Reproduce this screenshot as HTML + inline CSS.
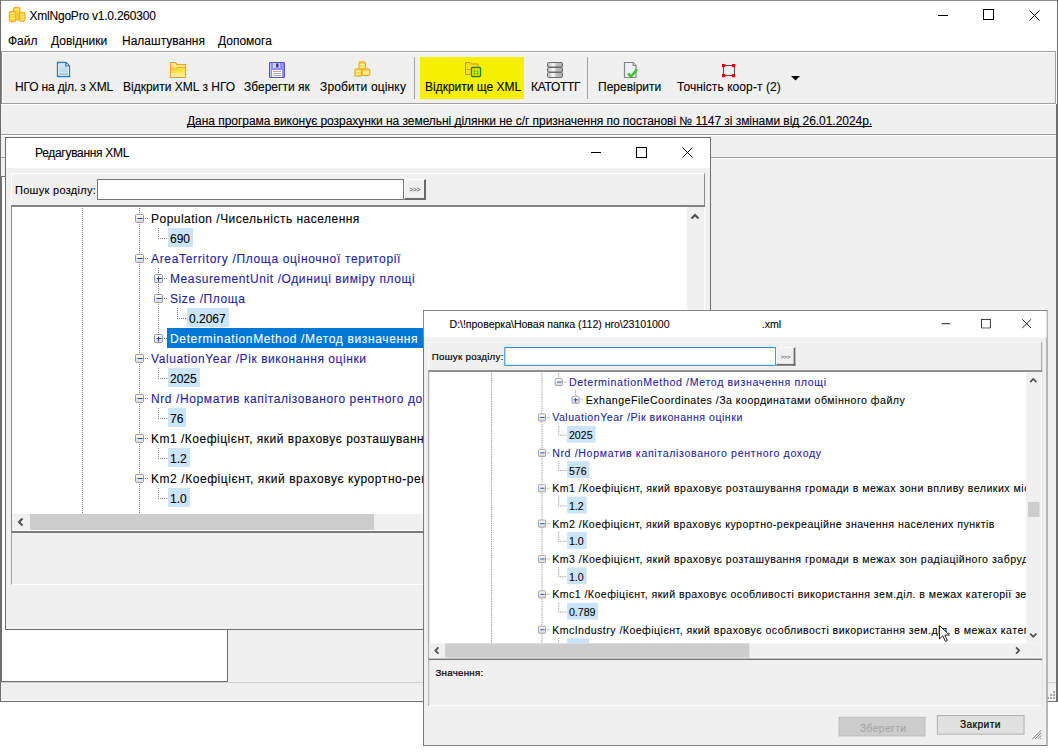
<!DOCTYPE html>
<html><head><meta charset="utf-8"><style>
html,body{margin:0;padding:0;background:#fff;width:1058px;height:753px;overflow:hidden;position:relative;font-family:"Liberation Sans", sans-serif}
.t{position:absolute;white-space:pre;font-family:"Liberation Sans", sans-serif;-webkit-text-stroke:0.1px currentColor}
</style></head><body>
<div style="position:absolute;left:0px;top:0px;width:1058px;height:702px;background:#fff;"></div><div style="position:absolute;left:0px;top:0px;width:1058px;height:1px;background:#8a8a8a"></div><div style="position:absolute;left:0px;top:0px;width:1px;height:702px;background:#6e6e6e"></div><div style="position:absolute;left:1057px;top:0px;width:1px;height:702px;background:#6e6e6e"></div><div style="position:absolute;left:1056px;top:104px;width:1px;height:598px;background:#6e6e6e"></div><div style="position:absolute;left:0px;top:701px;width:1058px;height:1px;background:#6e6e6e"></div><svg style="position:absolute;left:8px;top:6px" width="18" height="17" viewBox="0 0 18 17">
<g fill="#ffd535" stroke="#f29a18" stroke-width="0.9">
<rect x="5.5" y="1.3" width="6.5" height="12.5" rx="1.5"/>
<rect x="1.3" y="5.3" width="6.5" height="10.5" rx="1.5"/>
<rect x="11.3" y="6.3" width="5.8" height="9" rx="1.5"/>
</g>
<g stroke="#fff6b0" stroke-width="0.9">
<path d="M2.5 7.5h4M2.5 10h4M2.5 12.5h4M12.5 8.5h3.5M12.5 11h3.5M12.5 13.5h3.5M6.5 3.5h4.5"/>
</g></svg><div class="t" style="left:29.5px;top:9.84px;font-size:12px;line-height:12px;color:#000;letter-spacing:-0.22px;">XmlNgoPro v1.0.260300</div><svg style="position:absolute;left:938px;top:9px" width="10" height="12" viewBox="0 0 10 12"><path d="M0 6.5h10" stroke="#000" stroke-width="1"/></svg><svg style="position:absolute;left:983px;top:9px" width="11" height="11" viewBox="0 0 11 11"><rect x="0.5" y="0.5" width="10" height="10" fill="none" stroke="#000" stroke-width="1"/></svg><svg style="position:absolute;left:1029px;top:10px" width="11" height="11" viewBox="0 0 11 11"><path d="M0.5 0.5L10.5 10.5M10.5 0.5L0.5 10.5" stroke="#000" stroke-width="1"/></svg><div class="t" style="left:8px;top:34.84px;font-size:12px;line-height:12px;color:#000;">Файл</div><div class="t" style="left:51px;top:34.84px;font-size:12px;line-height:12px;color:#000;">Довідники</div><div class="t" style="left:122px;top:34.84px;font-size:12px;line-height:12px;color:#000;">Налаштування</div><div class="t" style="left:218px;top:34.84px;font-size:12px;line-height:12px;color:#000;">Допомога</div><div style="position:absolute;left:1px;top:51px;width:1055px;height:53px;background:#f0f0f0;border-top:1px solid #a0a0a0;border-bottom:1px solid #a0a0a0;border-right:1px solid #a0a0a0;border-left:1px solid #8a8a8a;box-shadow:inset 1px 1px #fff;box-sizing:border-box"></div><div style="position:absolute;left:420px;top:57px;width:104px;height:42px;background:#f5ef00"></div><div style="position:absolute;left:414px;top:57px;width:1px;height:42px;background:#a0a0a0"></div><div style="position:absolute;left:587px;top:57px;width:1px;height:42px;background:#a0a0a0"></div><div class="t" style="left:15px;top:80.84px;font-size:12px;line-height:12px;color:#000;letter-spacing:-0.15px;">НГО на діл. з XML</div><div class="t" style="left:123px;top:80.84px;font-size:12px;line-height:12px;color:#000;">Відкрити XML з НГО</div><div class="t" style="left:244px;top:80.84px;font-size:12px;line-height:12px;color:#000;">Зберегти як</div><div class="t" style="left:320px;top:80.84px;font-size:12px;line-height:12px;color:#000;letter-spacing:0.15px;">Зробити оцінку</div><div class="t" style="left:425px;top:80.84px;font-size:12px;line-height:12px;color:#000;">Відкрити ще XML</div><div class="t" style="left:531px;top:80.84px;font-size:12px;line-height:12px;color:#000;letter-spacing:-0.3px;">КАТОТТГ</div><div class="t" style="left:598px;top:80.84px;font-size:12px;line-height:12px;color:#000;">Перевірити</div><div class="t" style="left:677px;top:80.84px;font-size:12px;line-height:12px;color:#000;letter-spacing:0.08px;">Точність коор-т (2)</div><svg style="position:absolute;left:56px;top:61px" width="15" height="17" viewBox="0 0 15 17"><defs><linearGradient id="dg" x1="0" y1="0" x2="0" y2="1"><stop offset="0" stop-color="#c8e0f2"/><stop offset="1" stop-color="#a8d0ee"/></linearGradient></defs>
<path d="M1.5 1.5h8.5l3.5 3.5v10.5h-12z" fill="#fff" stroke="#1f7bc3" stroke-width="1.3"/>
<rect x="3" y="3" width="9" height="8" fill="url(#dg)" opacity="0.8"/><rect x="3" y="11.5" width="9" height="2.5" fill="#9fd0ee"/>
<path d="M9.8 2.2v2.8h2.8" fill="none" stroke="#1f7bc3" stroke-width="1.2"/></svg><svg style="position:absolute;left:169px;top:61px" width="18" height="18" viewBox="0 0 18 18"><defs><linearGradient id="fg" x1="0" y1="0" x2="0" y2="1"><stop offset="0" stop-color="#fff0b0"/><stop offset="0.5" stop-color="#ffe030"/><stop offset="1" stop-color="#fff5c0"/></linearGradient></defs>
<path d="M1.5 1.5h5l1.5 2h8.5v13h-15z" fill="url(#fg)" stroke="#f0a030" stroke-width="1.2"/>
<path d="M1.5 8h6l1-1.5h8" fill="none" stroke="#e8b040" stroke-width="1"/></svg><svg style="position:absolute;left:268px;top:61px" width="18" height="18" viewBox="0 0 18 18"><rect x="1.5" y="1.5" width="15" height="15" rx="0.5" fill="#9090f2" stroke="#5050c8" stroke-width="1"/>
<path d="M2.5 2.5v13" stroke="#c0c0ff" stroke-width="1"/>
<rect x="5" y="2" width="7" height="5" fill="#d0d0ff"/><rect x="8" y="2.5" width="2.5" height="4" fill="#3838a0"/>
<rect x="4" y="9" width="10" height="7" fill="#fff"/><path d="M5 10.5h8M5 12.5h8M5 14.5h8" stroke="#a8a8a8" stroke-width="1"/></svg><svg style="position:absolute;left:354px;top:61px" width="17" height="17" viewBox="0 0 17 17"><g fill="#ffd84a" stroke="#f0a020" stroke-width="0.9">
<rect x="5" y="0.8" width="6.5" height="7.5" rx="1"/>
<rect x="0.8" y="7.8" width="6.8" height="7.5" rx="1"/>
<rect x="8" y="8" width="7.8" height="6.5" rx="1"/></g>
<path d="M6 3.5h4.5M6 6h4.5M2 10.5h4.5M2 13h4.5M9 11h6M9 13h6" stroke="#fff8d0" stroke-width="0.9"/></svg><svg style="position:absolute;left:464px;top:61px" width="18" height="17" viewBox="0 0 18 17"><path d="M1.5 1.5h4.5l1.5 1.5h6.5v5h-6v5.5h-6.5z" fill="#ffe020" stroke="#d49010" stroke-width="1"/>
<path d="M2.5 8.5h5" stroke="#d49010" stroke-width="0.8"/>
<rect x="7.5" y="6.5" width="9" height="9" rx="1" fill="#f0f000" stroke="#108010" stroke-width="1.3"/>
<path d="M10.3 8.5v5.5M13.7 8.5v5.5M9 10h6M9 12.5h6" stroke="#60b040" stroke-width="0.8"/></svg><svg style="position:absolute;left:546px;top:61px" width="18" height="18" viewBox="0 0 18 18"><defs><linearGradient id="cg" x1="0" y1="0" x2="1" y2="0"><stop offset="0" stop-color="#b8b8b8"/><stop offset="0.4" stop-color="#f8f8f8"/><stop offset="0.6" stop-color="#c0c0c0"/><stop offset="1" stop-color="#a8a8a8"/></linearGradient></defs>
<g fill="url(#cg)" stroke="#6a6a6a" stroke-width="1"><rect x="1.5" y="1.5" width="15" height="4.5" rx="1"/><rect x="1.5" y="6.5" width="15" height="4.5" rx="1"/><rect x="1.5" y="11.5" width="15" height="5" rx="1"/></g></svg><svg style="position:absolute;left:623px;top:61px" width="16" height="18" viewBox="0 0 16 18"><path d="M1.5 1.5h8.5l3 3v12h-11.5z" fill="#eef0fa" stroke="#858585" stroke-width="1.2"/>
<path d="M10 1.5v3h3" fill="#ccc" stroke="#858585" stroke-width="1"/>
<path d="M5 12.5l3 3.2l6-7.5" fill="none" stroke="#40c030" stroke-width="2.6" stroke-linejoin="round"/></svg><svg style="position:absolute;left:721px;top:63px" width="16" height="16" viewBox="0 0 16 16"><rect x="2.5" y="2.5" width="11" height="10" fill="none" stroke="#555" stroke-width="1.1"/>
<g fill="#e00000"><rect x="1" y="1" width="3.2" height="3.2"/><rect x="11" y="1" width="3.2" height="3.2"/><rect x="1" y="11" width="3.2" height="3.2"/><rect x="11" y="11" width="3.2" height="3.2"/></g></svg><svg style="position:absolute;left:791px;top:76px" width="9" height="5" viewBox="0 0 9 5"><path d="M0 0h9L4.5 4.5z" fill="#000"/></svg><div style="position:absolute;left:1px;top:104px;width:1055px;height:31px;background:#f0f0f0;border-top:1px solid #fff;border-bottom:1px solid #a0a0a0;box-sizing:border-box"></div><div class="t" style="left:187px;top:114.84px;font-size:12px;line-height:12px;color:#000;letter-spacing:-0.045px;"><u style="text-decoration-skip-ink:none">Дана програма виконує розрахунки на земельні ділянки не с/г призначення по постанові № 1147 зі змінами від 26.01.2024р.</u></div><div style="position:absolute;left:1px;top:135px;width:1055px;height:23px;background:#f0f0f0;border-top:1px solid #fff;border-bottom:1px solid #a0a0a0;box-sizing:border-box"></div><div style="position:absolute;left:1px;top:158px;width:1055px;height:524px;background:#f0f0f0;border-top:1px solid #fff;box-sizing:border-box"></div><div style="position:absolute;left:1px;top:158px;width:227px;height:19px;background:#f0f0f0;border-bottom:1px solid #707070;box-sizing:border-box"></div><div style="position:absolute;left:1px;top:177px;width:227px;height:505px;background:#fff;border-left:1px solid #6c6f76;border-right:1px solid #707070;border-bottom:1px solid #707070;box-sizing:border-box"></div><div style="position:absolute;left:1px;top:682px;width:1055px;height:19px;background:#f0f0f0;border-top:1px solid #d0d0d0;border-bottom:1px solid #fff;box-sizing:border-box"></div><div style="position:absolute;left:5px;top:137px;width:706px;height:493px;transform-origin:0 0;transform:scale(1)"><div style="position:absolute;left:0px;top:0px;width:706px;height:493px;background:#f0f0f0;border:1px solid #6c6c6c;box-sizing:border-box"></div><div style="position:absolute;left:1px;top:1px;width:704px;height:30px;background:#fff"></div><div class="t" style="left:30px;top:9.84px;font-size:12px;line-height:12px;color:#000;letter-spacing:-0.3px;">Редагування XML</div><svg style="position:absolute;left:586px;top:9px" width="11" height="12" viewBox="0 0 11 12"><path d="M0 6.5h10" stroke="#000" stroke-width="1"/></svg><svg style="position:absolute;left:631px;top:10px" width="11" height="11" viewBox="0 0 11 11"><rect x="0.5" y="0.5" width="10" height="10" fill="none" stroke="#000" stroke-width="1"/></svg><svg style="position:absolute;left:677px;top:10px" width="11" height="11" viewBox="0 0 11 11"><path d="M0.5 0.5L10.5 10.5M10.5 0.5L0.5 10.5" stroke="#000" stroke-width="1"/></svg><div style="position:absolute;left:6px;top:36px;width:694px;height:412px;border-top:1px solid #fff;border-left:1px solid #fff;border-right:1px solid #8c8c8c;box-sizing:border-box"></div><div class="t" style="left:10px;top:47.69px;font-size:11px;line-height:11px;color:#000;letter-spacing:0.3px;">Пошук розділу:</div><div style="position:absolute;left:92px;top:42px;width:307px;height:21px;background:#fff;border:1px solid #767676;box-sizing:border-box"></div><div style="position:absolute;left:399px;top:42px;width:22px;height:21px;background:#f0f0f0;border-top:1px solid #fff;border-left:1px solid #fff;border-right:2px solid #6a6a6a;border-bottom:2px solid #6a6a6a;box-sizing:border-box"></div><div class="t" style="left:404.5px;top:49.50px;font-size:6.5px;line-height:6.5px;color:#555;letter-spacing:-0.3px;">&gt;&gt;&gt;</div><div style="position:absolute;left:6px;top:68px;width:694px;height:328px;background:#fff;border-top:2px solid #828282;border-left:1px solid #8a8b90;border-bottom:2px solid #7a7a7a;box-sizing:border-box"></div><div style="position:absolute;left:7px;top:70px;width:675px;height:307px;overflow:hidden"><div style="position:absolute;left:-7px;top:-70px;width:706px;height:493px"><svg style="position:absolute;left:0;top:0" width="706" height="493"><defs><linearGradient id="expg" x1="0" y1="0" x2="0" y2="1"><stop offset="0" stop-color="#fff"/><stop offset="1" stop-color="#d8d8d8"/></linearGradient></defs><line x1="77.5" y1="71" x2="77.5" y2="378" stroke="#808080" stroke-width="1" stroke-dasharray="1 1"/><line x1="134.5" y1="71" x2="134.5" y2="378" stroke="#808080" stroke-width="1" stroke-dasharray="1 1"/><line x1="153.5" y1="131" x2="153.5" y2="201" stroke="#808080" stroke-width="1" stroke-dasharray="1 1"/><line x1="172.5" y1="171" x2="172.5" y2="181" stroke="#808080" stroke-width="1" stroke-dasharray="1 1"/><rect x="130.5" y="77.5" width="8" height="8" rx="1" fill="url(#expg)" stroke="#9a9a9a" stroke-width="1"/><line x1="132.5" y1="81.5" x2="137.5" y2="81.5" stroke="#2040b0" stroke-width="1"/><line x1="140" y1="81.5" x2="144" y2="81.5" stroke="#808080" stroke-width="1" stroke-dasharray="1 1"/><line x1="153.5" y1="91" x2="153.5" y2="101" stroke="#808080" stroke-width="1" stroke-dasharray="1 1"/><line x1="153" y1="101.5" x2="162" y2="101.5" stroke="#808080" stroke-width="1" stroke-dasharray="1 1"/><rect x="130.5" y="117.5" width="8" height="8" rx="1" fill="url(#expg)" stroke="#9a9a9a" stroke-width="1"/><line x1="132.5" y1="121.5" x2="137.5" y2="121.5" stroke="#2040b0" stroke-width="1"/><line x1="140" y1="121.5" x2="144" y2="121.5" stroke="#808080" stroke-width="1" stroke-dasharray="1 1"/><rect x="149.5" y="137.5" width="8" height="8" rx="1" fill="url(#expg)" stroke="#9a9a9a" stroke-width="1"/><line x1="151.5" y1="141.5" x2="156.5" y2="141.5" stroke="#2040b0" stroke-width="1"/><line x1="153.5" y1="139.5" x2="153.5" y2="144.5" stroke="#2040b0" stroke-width="1"/><line x1="159" y1="141.5" x2="163" y2="141.5" stroke="#808080" stroke-width="1" stroke-dasharray="1 1"/><rect x="149.5" y="157.5" width="8" height="8" rx="1" fill="url(#expg)" stroke="#9a9a9a" stroke-width="1"/><line x1="151.5" y1="161.5" x2="156.5" y2="161.5" stroke="#2040b0" stroke-width="1"/><line x1="159" y1="161.5" x2="163" y2="161.5" stroke="#808080" stroke-width="1" stroke-dasharray="1 1"/><line x1="172.5" y1="171" x2="172.5" y2="181" stroke="#808080" stroke-width="1" stroke-dasharray="1 1"/><line x1="172" y1="181.5" x2="181" y2="181.5" stroke="#808080" stroke-width="1" stroke-dasharray="1 1"/><rect x="149.5" y="197.5" width="8" height="8" rx="1" fill="url(#expg)" stroke="#9a9a9a" stroke-width="1"/><line x1="151.5" y1="201.5" x2="156.5" y2="201.5" stroke="#2040b0" stroke-width="1"/><line x1="153.5" y1="199.5" x2="153.5" y2="204.5" stroke="#2040b0" stroke-width="1"/><line x1="159" y1="201.5" x2="163" y2="201.5" stroke="#808080" stroke-width="1" stroke-dasharray="1 1"/><rect x="130.5" y="217.5" width="8" height="8" rx="1" fill="url(#expg)" stroke="#9a9a9a" stroke-width="1"/><line x1="132.5" y1="221.5" x2="137.5" y2="221.5" stroke="#2040b0" stroke-width="1"/><line x1="140" y1="221.5" x2="144" y2="221.5" stroke="#808080" stroke-width="1" stroke-dasharray="1 1"/><line x1="153.5" y1="231" x2="153.5" y2="241" stroke="#808080" stroke-width="1" stroke-dasharray="1 1"/><line x1="153" y1="241.5" x2="162" y2="241.5" stroke="#808080" stroke-width="1" stroke-dasharray="1 1"/><rect x="130.5" y="257.5" width="8" height="8" rx="1" fill="url(#expg)" stroke="#9a9a9a" stroke-width="1"/><line x1="132.5" y1="261.5" x2="137.5" y2="261.5" stroke="#2040b0" stroke-width="1"/><line x1="140" y1="261.5" x2="144" y2="261.5" stroke="#808080" stroke-width="1" stroke-dasharray="1 1"/><line x1="153.5" y1="271" x2="153.5" y2="281" stroke="#808080" stroke-width="1" stroke-dasharray="1 1"/><line x1="153" y1="281.5" x2="162" y2="281.5" stroke="#808080" stroke-width="1" stroke-dasharray="1 1"/><rect x="130.5" y="297.5" width="8" height="8" rx="1" fill="url(#expg)" stroke="#9a9a9a" stroke-width="1"/><line x1="132.5" y1="301.5" x2="137.5" y2="301.5" stroke="#2040b0" stroke-width="1"/><line x1="140" y1="301.5" x2="144" y2="301.5" stroke="#808080" stroke-width="1" stroke-dasharray="1 1"/><line x1="153.5" y1="311" x2="153.5" y2="321" stroke="#808080" stroke-width="1" stroke-dasharray="1 1"/><line x1="153" y1="321.5" x2="162" y2="321.5" stroke="#808080" stroke-width="1" stroke-dasharray="1 1"/><rect x="130.5" y="337.5" width="8" height="8" rx="1" fill="url(#expg)" stroke="#9a9a9a" stroke-width="1"/><line x1="132.5" y1="341.5" x2="137.5" y2="341.5" stroke="#2040b0" stroke-width="1"/><line x1="140" y1="341.5" x2="144" y2="341.5" stroke="#808080" stroke-width="1" stroke-dasharray="1 1"/><line x1="153.5" y1="351" x2="153.5" y2="361" stroke="#808080" stroke-width="1" stroke-dasharray="1 1"/><line x1="153" y1="361.5" x2="162" y2="361.5" stroke="#808080" stroke-width="1" stroke-dasharray="1 1"/></svg><div class="t" style="left:146px;top:75.84px;font-size:12px;line-height:12px;color:#000;letter-spacing:0.48px;">Population /Чисельність населення</div><div style="position:absolute;left:163px;top:91px;width:25px;height:19px;background:#cce4f7"></div><div class="t" style="left:165px;top:95.84px;font-size:12px;line-height:12px;color:#000;">690</div><div class="t" style="left:146px;top:115.84px;font-size:12px;line-height:12px;color:#1e1e9c;letter-spacing:0.67px;">AreaTerritory /Площа оціночної території</div><div class="t" style="left:165px;top:135.84px;font-size:12px;line-height:12px;color:#1e1e9c;letter-spacing:0.6px;">MeasurementUnit /Одиниці виміру площі</div><div class="t" style="left:165px;top:155.84px;font-size:12px;line-height:12px;color:#1e1e9c;letter-spacing:0.6px;">Size /Площа</div><div style="position:absolute;left:182px;top:171px;width:42px;height:19px;background:#cce4f7"></div><div class="t" style="left:184px;top:175.84px;font-size:12px;line-height:12px;color:#000;">0.2067</div><div style="position:absolute;left:162px;top:191px;width:338px;height:20px;background:#0078d7"></div><div class="t" style="left:165px;top:195.84px;font-size:12px;line-height:12px;color:#fff;letter-spacing:0.65px;">DeterminationMethod /Метод визначення</div><div class="t" style="left:146px;top:215.84px;font-size:12px;line-height:12px;color:#1e1e9c;letter-spacing:0.57px;">ValuationYear /Рік виконання оцінки</div><div style="position:absolute;left:163px;top:231px;width:32px;height:19px;background:#cce4f7"></div><div class="t" style="left:165px;top:235.84px;font-size:12px;line-height:12px;color:#000;">2025</div><div class="t" style="left:146px;top:255.84px;font-size:12px;line-height:12px;color:#1e1e9c;letter-spacing:0.6px;">Nrd /Норматив капіталізованого рентного доходу</div><div style="position:absolute;left:163px;top:271px;width:18px;height:19px;background:#cce4f7"></div><div class="t" style="left:165px;top:275.84px;font-size:12px;line-height:12px;color:#000;">76</div><div class="t" style="left:146px;top:295.84px;font-size:12px;line-height:12px;color:#000;letter-spacing:0.5px;">Km1 /Коефіцієнт, який враховує розташування громади в межах зони впливу великих міст</div><div style="position:absolute;left:163px;top:311px;width:22px;height:19px;background:#cce4f7"></div><div class="t" style="left:165px;top:315.84px;font-size:12px;line-height:12px;color:#000;">1.2</div><div class="t" style="left:146px;top:335.84px;font-size:12px;line-height:12px;color:#000;letter-spacing:0.56px;">Km2 /Коефіцієнт, який враховує курортно-рекреаційне значення населених пунктів</div><div style="position:absolute;left:163px;top:351px;width:22px;height:19px;background:#cce4f7"></div><div class="t" style="left:165px;top:355.84px;font-size:12px;line-height:12px;color:#000;">1.0</div></div></div><div style="position:absolute;left:682px;top:70px;width:17px;height:307px;background:#f0f0f0"></div><svg style="position:absolute;left:684px;top:74px" width="12" height="10" viewBox="0 0 12 10"><path d="M2.5 7.5L6 4L9.5 7.5" fill="none" stroke="#505050" stroke-width="2"/></svg><div style="position:absolute;left:7px;top:377px;width:675px;height:16px;background:#f0f0f0"></div><div style="position:absolute;left:25px;top:377px;width:344px;height:16px;background:#cdcdcd"></div><svg style="position:absolute;left:10px;top:379px" width="12" height="12" viewBox="0 0 12 12"><path d="M7.5 2.5L4 6L7.5 9.5" fill="none" stroke="#505050" stroke-width="2"/></svg><div style="position:absolute;left:6px;top:396px;width:694px;height:52px;background:#f0f0f0;border-left:1px solid #a0a0a0;border-bottom:1px solid #fff;box-sizing:border-box"></div></div><div style="position:absolute;left:423px;top:310px;width:706px;height:493px;transform-origin:0 0;transform:scale(0.8845)"><div style="position:absolute;left:0px;top:0px;width:706px;height:493px;background:#f0f0f0;border:1px solid #6c6c6c;box-sizing:border-box"></div><div style="position:absolute;left:1px;top:1px;width:704px;height:30px;background:#fff"></div><div class="t" style="left:30px;top:9.84px;font-size:12px;line-height:12px;color:#000;letter-spacing:-0.065px;">D:\!проверка\Новая папка (112) нго\23101000</div><div class="t" style="left:383px;top:9.84px;font-size:12px;line-height:12px;color:#000;">.xml</div><svg style="position:absolute;left:586px;top:9px" width="11" height="12" viewBox="0 0 11 12"><path d="M0 6.5h10" stroke="#000" stroke-width="1"/></svg><svg style="position:absolute;left:631px;top:10px" width="11" height="11" viewBox="0 0 11 11"><rect x="0.5" y="0.5" width="10" height="10" fill="none" stroke="#000" stroke-width="1"/></svg><svg style="position:absolute;left:677px;top:10px" width="11" height="11" viewBox="0 0 11 11"><path d="M0.5 0.5L10.5 10.5M10.5 0.5L0.5 10.5" stroke="#000" stroke-width="1"/></svg><div style="position:absolute;left:6px;top:36px;width:694px;height:412px;border-top:1px solid #fff;border-left:1px solid #fff;border-right:1px solid #8c8c8c;box-sizing:border-box"></div><div class="t" style="left:10px;top:47.69px;font-size:11px;line-height:11px;color:#000;letter-spacing:0.3px;-webkit-text-stroke:0.2px #000">Пошук розділу:</div><div style="position:absolute;left:92px;top:42px;width:307px;height:21px;background:#fff;border:1px solid #0078d7;box-sizing:border-box"></div><div style="position:absolute;left:399px;top:42px;width:22px;height:21px;background:#f0f0f0;border-top:1px solid #fff;border-left:1px solid #fff;border-right:2px solid #6a6a6a;border-bottom:2px solid #6a6a6a;box-sizing:border-box"></div><div class="t" style="left:404.5px;top:49.50px;font-size:6.5px;line-height:6.5px;color:#555;letter-spacing:-0.3px;">&gt;&gt;&gt;</div><div style="position:absolute;left:6px;top:68px;width:694px;height:328px;background:#fff;border-top:2px solid #828282;border-left:1px solid #8a8b90;border-bottom:2px solid #7a7a7a;box-sizing:border-box"></div><div style="position:absolute;left:7px;top:70px;width:675px;height:307px;overflow:hidden"><div style="position:absolute;left:-7px;top:-70px;width:706px;height:493px"><svg style="position:absolute;left:0;top:0" width="706" height="493"><defs><linearGradient id="expg" x1="0" y1="0" x2="0" y2="1"><stop offset="0" stop-color="#fff"/><stop offset="1" stop-color="#d8d8d8"/></linearGradient></defs><line x1="77.5" y1="71" x2="77.5" y2="378" stroke="#808080" stroke-width="1" stroke-dasharray="1 1"/><line x1="134.5" y1="71" x2="134.5" y2="378" stroke="#808080" stroke-width="1" stroke-dasharray="1 1"/><line x1="153.5" y1="71" x2="153.5" y2="76" stroke="#808080" stroke-width="1" stroke-dasharray="1 1"/><line x1="172.5" y1="91" x2="172.5" y2="96" stroke="#808080" stroke-width="1" stroke-dasharray="1 1"/><rect x="149.5" y="77.5" width="8" height="8" rx="1" fill="url(#expg)" stroke="#9a9a9a" stroke-width="1"/><line x1="151.5" y1="81.5" x2="156.5" y2="81.5" stroke="#2040b0" stroke-width="1"/><line x1="159" y1="81.5" x2="163" y2="81.5" stroke="#808080" stroke-width="1" stroke-dasharray="1 1"/><rect x="168.5" y="97.5" width="8" height="8" rx="1" fill="url(#expg)" stroke="#9a9a9a" stroke-width="1"/><line x1="170.5" y1="101.5" x2="175.5" y2="101.5" stroke="#2040b0" stroke-width="1"/><line x1="172.5" y1="99.5" x2="172.5" y2="104.5" stroke="#2040b0" stroke-width="1"/><line x1="178" y1="101.5" x2="182" y2="101.5" stroke="#808080" stroke-width="1" stroke-dasharray="1 1"/><rect x="130.5" y="117.5" width="8" height="8" rx="1" fill="url(#expg)" stroke="#9a9a9a" stroke-width="1"/><line x1="132.5" y1="121.5" x2="137.5" y2="121.5" stroke="#2040b0" stroke-width="1"/><line x1="140" y1="121.5" x2="144" y2="121.5" stroke="#808080" stroke-width="1" stroke-dasharray="1 1"/><line x1="153.5" y1="131" x2="153.5" y2="141" stroke="#808080" stroke-width="1" stroke-dasharray="1 1"/><line x1="153" y1="141.5" x2="162" y2="141.5" stroke="#808080" stroke-width="1" stroke-dasharray="1 1"/><rect x="130.5" y="157.5" width="8" height="8" rx="1" fill="url(#expg)" stroke="#9a9a9a" stroke-width="1"/><line x1="132.5" y1="161.5" x2="137.5" y2="161.5" stroke="#2040b0" stroke-width="1"/><line x1="140" y1="161.5" x2="144" y2="161.5" stroke="#808080" stroke-width="1" stroke-dasharray="1 1"/><line x1="153.5" y1="171" x2="153.5" y2="181" stroke="#808080" stroke-width="1" stroke-dasharray="1 1"/><line x1="153" y1="181.5" x2="162" y2="181.5" stroke="#808080" stroke-width="1" stroke-dasharray="1 1"/><rect x="130.5" y="197.5" width="8" height="8" rx="1" fill="url(#expg)" stroke="#9a9a9a" stroke-width="1"/><line x1="132.5" y1="201.5" x2="137.5" y2="201.5" stroke="#2040b0" stroke-width="1"/><line x1="140" y1="201.5" x2="144" y2="201.5" stroke="#808080" stroke-width="1" stroke-dasharray="1 1"/><line x1="153.5" y1="211" x2="153.5" y2="221" stroke="#808080" stroke-width="1" stroke-dasharray="1 1"/><line x1="153" y1="221.5" x2="162" y2="221.5" stroke="#808080" stroke-width="1" stroke-dasharray="1 1"/><rect x="130.5" y="237.5" width="8" height="8" rx="1" fill="url(#expg)" stroke="#9a9a9a" stroke-width="1"/><line x1="132.5" y1="241.5" x2="137.5" y2="241.5" stroke="#2040b0" stroke-width="1"/><line x1="140" y1="241.5" x2="144" y2="241.5" stroke="#808080" stroke-width="1" stroke-dasharray="1 1"/><line x1="153.5" y1="251" x2="153.5" y2="261" stroke="#808080" stroke-width="1" stroke-dasharray="1 1"/><line x1="153" y1="261.5" x2="162" y2="261.5" stroke="#808080" stroke-width="1" stroke-dasharray="1 1"/><rect x="130.5" y="277.5" width="8" height="8" rx="1" fill="url(#expg)" stroke="#9a9a9a" stroke-width="1"/><line x1="132.5" y1="281.5" x2="137.5" y2="281.5" stroke="#2040b0" stroke-width="1"/><line x1="140" y1="281.5" x2="144" y2="281.5" stroke="#808080" stroke-width="1" stroke-dasharray="1 1"/><line x1="153.5" y1="291" x2="153.5" y2="301" stroke="#808080" stroke-width="1" stroke-dasharray="1 1"/><line x1="153" y1="301.5" x2="162" y2="301.5" stroke="#808080" stroke-width="1" stroke-dasharray="1 1"/><rect x="130.5" y="317.5" width="8" height="8" rx="1" fill="url(#expg)" stroke="#9a9a9a" stroke-width="1"/><line x1="132.5" y1="321.5" x2="137.5" y2="321.5" stroke="#2040b0" stroke-width="1"/><line x1="140" y1="321.5" x2="144" y2="321.5" stroke="#808080" stroke-width="1" stroke-dasharray="1 1"/><line x1="153.5" y1="331" x2="153.5" y2="341" stroke="#808080" stroke-width="1" stroke-dasharray="1 1"/><line x1="153" y1="341.5" x2="162" y2="341.5" stroke="#808080" stroke-width="1" stroke-dasharray="1 1"/><rect x="130.5" y="357.5" width="8" height="8" rx="1" fill="url(#expg)" stroke="#9a9a9a" stroke-width="1"/><line x1="132.5" y1="361.5" x2="137.5" y2="361.5" stroke="#2040b0" stroke-width="1"/><line x1="140" y1="361.5" x2="144" y2="361.5" stroke="#808080" stroke-width="1" stroke-dasharray="1 1"/><line x1="153.5" y1="371" x2="153.5" y2="381" stroke="#808080" stroke-width="1" stroke-dasharray="1 1"/><line x1="153" y1="381.5" x2="162" y2="381.5" stroke="#808080" stroke-width="1" stroke-dasharray="1 1"/></svg><div class="t" style="left:165px;top:75.84px;font-size:12px;line-height:12px;color:#1e1e9c;letter-spacing:0.72px;">DeterminationMethod /Метод визначення площі</div><div class="t" style="left:184px;top:95.84px;font-size:12px;line-height:12px;color:#000;letter-spacing:0.53px;">ExhangeFileCoordinates /За координатами обмінного файлу</div><div class="t" style="left:146px;top:115.84px;font-size:12px;line-height:12px;color:#1e1e9c;letter-spacing:0.57px;">ValuationYear /Рік виконання оцінки</div><div style="position:absolute;left:163px;top:131px;width:32px;height:19px;background:#cce4f7"></div><div class="t" style="left:165px;top:135.84px;font-size:12px;line-height:12px;color:#000;">2025</div><div class="t" style="left:146px;top:155.84px;font-size:12px;line-height:12px;color:#1e1e9c;letter-spacing:0.72px;">Nrd /Норматив капіталізованого рентного доходу</div><div style="position:absolute;left:163px;top:171px;width:25px;height:19px;background:#cce4f7"></div><div class="t" style="left:165px;top:175.84px;font-size:12px;line-height:12px;color:#000;">576</div><div class="t" style="left:146px;top:195.84px;font-size:12px;line-height:12px;color:#000;letter-spacing:0.54px;">Km1 /Коефіцієнт, який враховує розташування громади в межах зони впливу великих міст</div><div style="position:absolute;left:163px;top:211px;width:22px;height:19px;background:#cce4f7"></div><div class="t" style="left:165px;top:215.84px;font-size:12px;line-height:12px;color:#000;">1.2</div><div class="t" style="left:146px;top:235.84px;font-size:12px;line-height:12px;color:#000;letter-spacing:0.515px;">Km2 /Коефіцієнт, який враховує курортно-рекреаційне значення населених пунктів</div><div style="position:absolute;left:163px;top:251px;width:22px;height:19px;background:#cce4f7"></div><div class="t" style="left:165px;top:255.84px;font-size:12px;line-height:12px;color:#000;">1.0</div><div class="t" style="left:146px;top:275.84px;font-size:12px;line-height:12px;color:#000;letter-spacing:0.54px;">Km3 /Коефіцієнт, який враховує розташування громади в межах зон радіаційного забруднення</div><div style="position:absolute;left:163px;top:291px;width:22px;height:19px;background:#cce4f7"></div><div class="t" style="left:165px;top:295.84px;font-size:12px;line-height:12px;color:#000;">1.0</div><div class="t" style="left:146px;top:315.84px;font-size:12px;line-height:12px;color:#000;letter-spacing:0.5px;">Kmc1 /Коефіцієнт, який враховує особливості використання зем.діл. в межах категорії земель</div><div style="position:absolute;left:163px;top:331px;width:35px;height:19px;background:#cce4f7"></div><div class="t" style="left:165px;top:335.84px;font-size:12px;line-height:12px;color:#000;">0.789</div><div class="t" style="left:146px;top:355.84px;font-size:12px;line-height:12px;color:#000;letter-spacing:0.5px;">KmcIndustry /Коефіцієнт, який враховує особливості використання зем.діл. в межах категорії земель</div><div style="position:absolute;left:163px;top:371px;width:25px;height:19px;background:#cce4f7"></div><div class="t" style="left:165px;top:375.84px;font-size:12px;line-height:12px;color:#000;"></div></div></div><div style="position:absolute;left:682px;top:70px;width:17px;height:307px;background:#f0f0f0"></div><svg style="position:absolute;left:684px;top:74px" width="12" height="10" viewBox="0 0 12 10"><path d="M2.5 7.5L6 4L9.5 7.5" fill="none" stroke="#505050" stroke-width="2"/></svg><svg style="position:absolute;left:684px;top:363px" width="12" height="10" viewBox="0 0 12 10"><path d="M2.5 3L6 6.5L9.5 3" fill="none" stroke="#505050" stroke-width="2"/></svg><div style="position:absolute;left:684px;top:217px;width:13px;height:17px;background:#cdcdcd"></div><div style="position:absolute;left:7px;top:377px;width:675px;height:16px;background:#f0f0f0"></div><div style="position:absolute;left:25px;top:377px;width:344px;height:16px;background:#cdcdcd"></div><svg style="position:absolute;left:10px;top:379px" width="12" height="12" viewBox="0 0 12 12"><path d="M7.5 2.5L4 6L7.5 9.5" fill="none" stroke="#505050" stroke-width="2"/></svg><svg style="position:absolute;left:666px;top:379px" width="12" height="12" viewBox="0 0 12 12"><path d="M4.5 2.5L8 6L4.5 9.5" fill="none" stroke="#505050" stroke-width="2"/></svg><div style="position:absolute;left:682px;top:377px;width:17px;height:16px;background:#f0f0f0"></div><div style="position:absolute;left:6px;top:396px;width:694px;height:52px;background:#f0f0f0;border-left:1px solid #a0a0a0;border-bottom:1px solid #fff;box-sizing:border-box"></div><div class="t" style="left:14px;top:404.69px;font-size:11px;line-height:11px;color:#000;letter-spacing:0.3px;-webkit-text-stroke:0.25px #000">Значення:</div><div style="position:absolute;left:470px;top:460px;width:98px;height:22px;background:#cccccc;border:1px solid #bfbfbf;box-sizing:border-box"></div><div class="t" style="left:494px;top:467.77px;font-size:11.5px;line-height:11.5px;color:#a6a6a6;letter-spacing:0.5px;-webkit-text-stroke:0.15px #a6a6a6">Зберегти</div><div style="position:absolute;left:581px;top:458px;width:99px;height:22px;background:#e1e1e1;border:1px solid #adadad;box-sizing:border-box"></div><div class="t" style="left:607px;top:464.27px;font-size:11.5px;line-height:11.5px;color:#000;letter-spacing:0.5px;-webkit-text-stroke:0.22px #000">Закрити</div><svg style="position:absolute;left:688px;top:474px" width="12" height="12" viewBox="0 0 12 12"><path d="M11 1L1 11M11 4L4 11M11 7L7 11M11 10L10 11" stroke="#707070" stroke-width="1"/></svg></div><div style="position:absolute;left:1053px;top:691px;width:2px;height:2px;background:#a8a8a8"></div><div style="position:absolute;left:1050px;top:694px;width:2px;height:2px;background:#a8a8a8"></div><div style="position:absolute;left:1053px;top:694px;width:2px;height:2px;background:#a8a8a8"></div><div style="position:absolute;left:1047px;top:697px;width:2px;height:2px;background:#a8a8a8"></div><div style="position:absolute;left:1050px;top:697px;width:2px;height:2px;background:#a8a8a8"></div><div style="position:absolute;left:1053px;top:697px;width:2px;height:2px;background:#a8a8a8"></div><svg style="position:absolute;left:938px;top:624px" width="13" height="20" viewBox="0 0 13 20"><path d="M1.5 1.5v13.5l3.3-3.2l2.6 5.6l1.9-0.9l-2.5-5.4h4.6z" fill="#fff" stroke="#222" stroke-width="1" stroke-linejoin="round"/></svg>
</body></html>
